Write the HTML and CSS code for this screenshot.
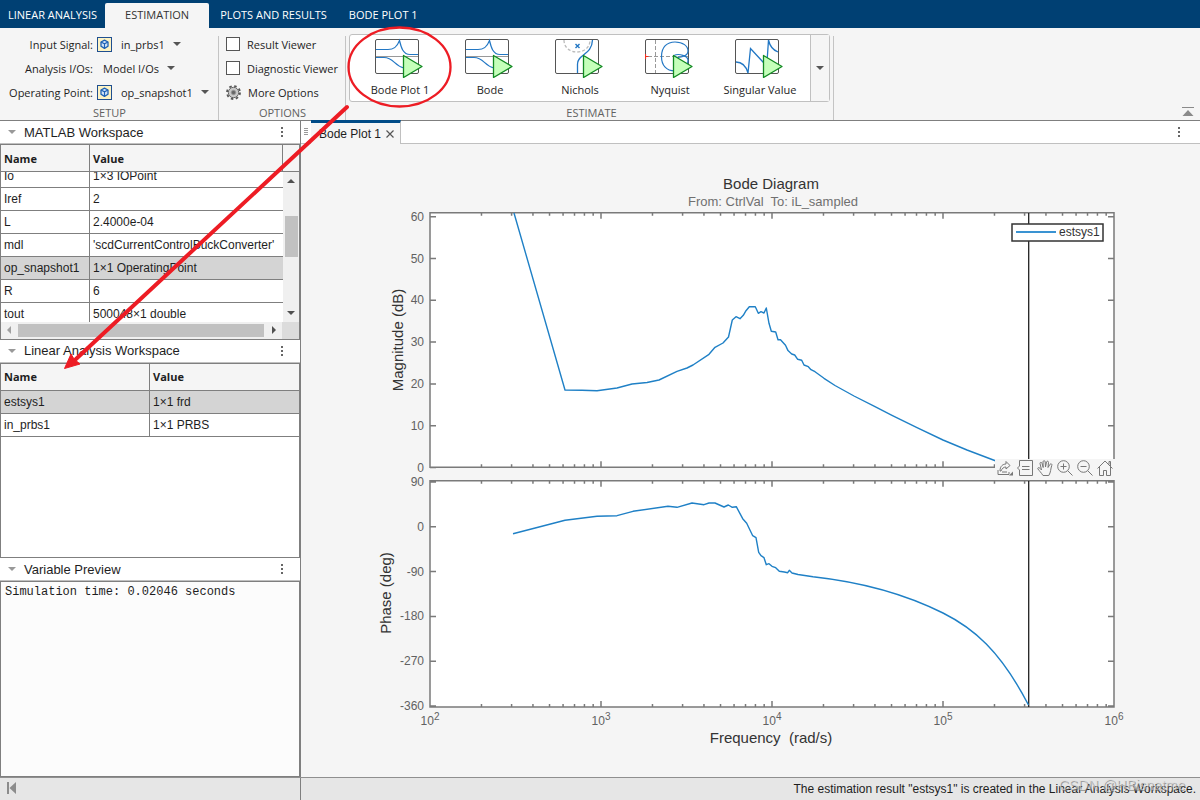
FILE: index.html
```html
<!DOCTYPE html>
<html lang="en">
<head>
    <meta charset="UTF-8">
    <meta name="viewport" content="width=device-width, initial-scale=1.0">
    <title>Linear Analysis Tool</title>
    <link rel="stylesheet" href="styles.css">
</head>
<body>
    <!-- shared icon shapes -->
    <svg class="defs" width="0" height="0">
        <symbol id="cube" viewBox="0 0 15 15">
            <rect x="0.5" y="0.5" width="14" height="14" fill="#fdf3c4" stroke="#1f4f90"/>
            <path d="M7.5 3.2 L11 5 V9.2 L7.5 11.400 L4 9.2 V5 Z" fill="#cfe3f7" stroke="#1f62b5" stroke-width="1.3" stroke-linejoin="round"/>
            <path d="M4 5 L7.5 6.800 L11 5 M7.5 6.800 V11" fill="none" stroke="#1f62b5" stroke-width="1.1"/>
        </symbol>
        <symbol id="play" viewBox="0 0 50 40">
            <path d="M28.5 17.5 L47 28.5 L28.5 39.5 Z" fill="#c5ffba" stroke="#128a22" stroke-width="1.3" stroke-linejoin="round"/>
        </symbol>
        <symbol id="bode" viewBox="0 0 50 40">
            <rect x="0.5" y="1.5" width="43" height="34" rx="1.5" fill="#fff" stroke="#555"/>
            <path d="M1 18.5 H43" stroke="#999"/>
            <path d="M1 11.5 H13 C19 11.5 22 9 24.5 2.5 C26 9 28 16.5 35 16.5 H43" fill="none" stroke="#2277c4" stroke-width="1.2"/>
            <path d="M1 19.5 H9 C19 19.5 19 28 29 30" fill="none" stroke="#2277c4" stroke-width="1.2"/>
            <use href="#play"/>
        </symbol>
    </svg>

    <nav class="tabs">
        <button class="tab first">LINEAR ANALYSIS</button>
        <button class="tab active">ESTIMATION</button>
        <button class="tab">PLOTS AND RESULTS</button>
        <button class="tab">BODE PLOT 1</button>
    </nav>

    <div class="ribbon">
        <section class="group setup">
            <div class="rows">
                <div class="row">
                    <label for="inputSignal">Input Signal:</label>
                    <svg class="cube"><use href="#cube"/></svg>
                    <span class="picker"><select id="inputSignal"><option>in_prbs1</option></select></span>
                </div>
                <div class="row">
                    <label for="analysisIos">Analysis I/Os:</label>
                    <span class="picker"><select id="analysisIos"><option>Model I/Os</option></select></span>
                </div>
                <div class="row">
                    <label for="operatingPoint">Operating Point:</label>
                    <svg class="cube"><use href="#cube"/></svg>
                    <span class="picker"><select id="operatingPoint"><option>op_snapshot1</option></select></span>
                </div>
            </div>
            <h3>SETUP</h3>
        </section>

        <section class="group options">
            <div class="rows">
                <label class="row"><input type="checkbox" id="resultViewer">Result Viewer</label>
                <label class="row"><input type="checkbox" id="diagnosticViewer">Diagnostic Viewer</label>
                <button class="row more">
                    <svg width="15" height="15" viewBox="0 0 15 15">
                        <circle cx="7.5" cy="7.5" r="6.5" fill="none" stroke="#555" stroke-width="1.8" stroke-dasharray="2.5 2.6"/>
                        <circle cx="7.5" cy="7.5" r="5.2" fill="#c8c8c8" stroke="#666"/>
                        <circle cx="7.5" cy="7.5" r="2.2" fill="#666" stroke="#999"/>
                    </svg>
                    More Options
                </button>
            </div>
            <h3>OPTIONS</h3>
        </section>

        <section class="group estimate">
            <div class="gallery">
                <button class="item">
                    <svg class="plot-icon"><use href="#bode"/></svg>
                    Bode Plot 1
                </button>
                <button class="item">
                    <svg class="plot-icon"><use href="#bode"/></svg>
                    Bode
                </button>
                <button class="item">
                    <svg class="plot-icon" viewBox="0 0 50 40">
                        <rect x="0.5" y="1.5" width="43" height="34" rx="1.5" fill="#fff" stroke="#555"/>
                        <path d="M9 2 C9 18 35 18 35 2" fill="none" stroke="#bbb" stroke-width="1.3" stroke-dasharray="3 2"/>
                        <path d="M20.5 6 L24.5 10 M24.5 6 L20.5 10" stroke="#2277c4" stroke-width="1.4"/>
                        <path d="M37.5 2 C37 17 22.5 16 22.5 26 V35" fill="none" stroke="#2277c4" stroke-width="1.3"/>
                        <use href="#play"/>
                    </svg>
                    Nichols
                </button>
                <button class="item">
                    <svg class="plot-icon" viewBox="0 0 50 40">
                        <rect x="0.5" y="1.5" width="43" height="34" rx="1.5" fill="#fff" stroke="#555"/>
                        <path d="M10.5 2 V35 M3 18.5 H43" stroke="#999" stroke-dasharray="4 2"/>
                        <path d="M0.5 16 V21 M0.5 18.5 H3.5" stroke="#f03020" stroke-width="1.2"/>
                        <path d="M29 17.5 C34 15 43 18 43 22 C43 30 37 33 30 33 C21 33 16.5 27 16.5 18.5 C16.5 9 22 4 30 4 C38 4 43 8 43 13 C43 18 36 20 30 19" fill="none" stroke="#2277c4" stroke-width="1.2"/>
                        <use href="#play"/>
                    </svg>
                    Nyquist
                </button>
                <button class="item">
                    <svg class="plot-icon" viewBox="0 0 50 40">
                        <rect x="0.5" y="1.5" width="43" height="34" rx="1.5" fill="#fff" stroke="#555"/>
                        <path d="M1 24 C8 24 11 28 13 35 L15.5 10.5 L28 24 L32 24 L33.5 2 C35 9 38 12 43 14" fill="none" stroke="#2277c4" stroke-width="1.3"/>
                        <use href="#play"/>
                    </svg>
                    Singular Value
                </button>
                <button class="expand" aria-label="Show more"></button>
            </div>
            <h3>ESTIMATE</h3>
        </section>

        <button class="minimize" aria-label="Minimize">
            <svg width="12" height="10" viewBox="0 0 12 10"><path d="M0 0.5 H12" stroke="#8a8a8a"/><path d="M0.5 9 L6 3 L11.5 9 Z" fill="#8a8a8a"/></svg>
        </button>
    </div>

    <main class="main">
        <aside class="side">
            <section class="panel">
                <header class="panel-head"><h2>MATLAB Workspace</h2><button class="kebab" aria-label="Panel menu"></button></header>
                <div class="panel-body">
                    <div class="grid-head">
                        <span class="name">Name</span><span class="value">Value</span><span class="stub"></span>
                    </div>
                    <div class="scroll">
                        <div class="view">
                            <table class="vars narrow">
                                <tr><td>Io</td><td>1×3 IOPoint</td></tr>
                                <tr><td>Iref</td><td>2</td></tr>
                                <tr><td>L</td><td>2.4000e-04</td></tr>
                                <tr><td>mdl</td><td>'scdCurrentControlBuckConverter'</td></tr>
                                <tr class="selected"><td>op_snapshot1</td><td>1×1 OperatingPoint</td></tr>
                                <tr><td>R</td><td>6</td></tr>
                                <tr><td>tout</td><td>500048×1 double</td></tr>
                            </table>
                        </div>
                        <div class="vbar"><i class="up"></i><i class="thumb"></i><i class="down"></i></div>
                    </div>
                    <div class="hbar"><i class="left"></i><i class="thumb"></i><i class="right"></i><i class="corner"></i></div>
                </div>
            </section>

            <section class="panel">
                <header class="panel-head"><h2>Linear Analysis Workspace</h2><button class="kebab" aria-label="Panel menu"></button></header>
                <div class="panel-body">
                    <table class="vars half">
                        <tr><th>Name</th><th>Value</th></tr>
                        <tr class="selected"><td>estsys1</td><td>1×1 frd</td></tr>
                        <tr><td>in_prbs1</td><td>1×1 PRBS</td></tr>
                    </table>
                </div>
            </section>

            <section class="panel">
                <header class="panel-head"><h2>Variable Preview</h2><button class="kebab" aria-label="Panel menu"></button></header>
                <div class="panel-body preview">Simulation time: 0.02046 seconds</div>
            </section>
        </aside>

        <section class="document">
            <div class="doc-tabs">
                <i class="grip"></i>
                <div class="doc-tab">
                    Bode Plot 1
                    <button class="close" aria-label="Close"><svg width="8" height="8" viewBox="0 0 8 8"><path d="M0.5 0.5 L7.5 7.5 M7.5 0.5 L0.5 7.5" stroke="#555" stroke-width="1.2"/></svg></button>
                </div>
                <button class="kebab" aria-label="Document menu"></button>
            </div>

            <svg class="figure" viewBox="301 144 899 633">
                <rect x="430" y="213" width="684" height="254" fill="#fff"/>
                <rect x="430" y="481" width="684" height="226" fill="#fff"/>
                <g id="axes"></g>
                <path class="limit" d="M1028.7 213 V467 M1028.7 481 V707"/>
                <path class="curve" d="M514 213 L565 390 L582 390.3 L597 390.7 L617 388 L632 384 L647 382.5 L659 380 L677 371.3 L687 368 L693 365 L709 354.3 L715 347.3 L723 343 L728.5 337 L732.3 320 L736 316.7 L740 318.7 L743.3 315.3 L746 310.7 L749.3 306.7 L755.3 306.7 L758.3 313.3 L761 311.7 L764 313 L766.3 308 L769 323.3 L771.3 331.3 L775.7 332 L778 339.7 L780.5 339.7 L785.5 345.3 L788 350.6 L791.7 354 L794.7 355 L797.7 359.3 L801.7 360.3 L804 365 L808.3 366.7 L811 369.7 L815 371.7 L824 378.3 L835 385.5 L854 396 L875 406.7 L892 415.3 L917 427.7 L943 440 L967 450 L996 461"/>
                <path class="curve" d="M513 533.7 L540 526.7 L565 520.3 L597 516.3 L617 515.7 L633 511.3 L668 506.3 L677 507.3 L692 503 L704 504.7 L709 503 L715 503 L724 507 L728.3 505 L732.3 507.3 L736.3 506.7 L742.7 518.7 L746.7 523.3 L752.7 535.7 L756 537.7 L758.7 552.3 L761 555.7 L764 557.7 L766.3 564.7 L769 563.7 L772 566.3 L775.7 567.7 L779.3 571.3 L784.3 572 L787.7 572.7 L789.3 570.3 L792 573 L798 574.5 L813 576.7 C870 583 913 598 943 613 S1000 650 1028.5 705"/>

                <text class="title" x="771" y="189">Bode Diagram</text>
                <text class="subtitle" x="773" y="206">From: CtrlVal&nbsp; To: iL_sampled</text>
                <text class="title" x="771" y="743">Frequency&nbsp; (rad/s)</text>
                <text class="title" transform="translate(403 340) rotate(-90)">Magnitude (dB)</text>
                <text class="title" transform="translate(391 593) rotate(-90)">Phase (deg)</text>

                <rect class="legend" x="1012" y="224" width="91" height="17"/>
                <path class="key" d="M1016 232 H1056"/>
                <text class="legend-text" x="1059" y="236">estsys1</text>

                <foreignObject x="995" y="459" width="120" height="20">
                    <div class="toolbar">
                        <button aria-label="Export"><svg viewBox="0 0 16 16"><path d="M1 10 V14.5 H12 V12 M3 11 C3 6 6 4 9 4 V1.5 L13 5.5 L9 9 V7 C6.5 7 5 8.5 4 11 Z M5 12 H10"/><path d="M16 11.5 V15.5 H12 Z" fill="#777" stroke="none"/></svg></button>
                        <button aria-label="Data tips"><svg viewBox="0 0 16 16"><path d="M2.5 0.5 H15.5 V15.5 H2.5 V10 L0.5 8 L2.5 6 Z M5 6.5 H12.5 M5 9.5 H12.5"/></svg></button>
                        <button aria-label="Pan"><svg viewBox="0 0 16 16"><path d="M6 15.5 C4 12.5 2.5 11 0.8 8.8 C0.5 7.5 2 7.2 3 8.3 L4.5 10 L3 3.5 C3 2 4.7 2 5 3.3 L6.2 7.5 L6 1.8 C6.2 0.3 8 0.3 8.2 1.8 L8.5 7 L9.5 2 C10 0.7 11.6 1 11.5 2.5 L11 7.5 L13 4.3 C14 3.3 15.3 4 14.8 5.3 C13.5 9 14 12 11.8 15.5 Z"/></svg></button>
                        <button aria-label="Zoom in"><svg viewBox="0 0 16 16"><circle cx="6.5" cy="6.5" r="5.8"/><path d="M3.5 6.5 H9.5 M6.5 3.5 V9.5 M10.8 10.8 L15.5 15.5"/></svg></button>
                        <button aria-label="Zoom out"><svg viewBox="0 0 16 16"><circle cx="6.5" cy="6.5" r="5.8"/><path d="M3.5 6.5 H9.5 M10.8 10.8 L15.5 15.5"/></svg></button>
                        <button aria-label="Restore view"><svg viewBox="0 0 16 16"><path d="M0.5 8.5 L8 1 L15.5 8.5 M2.5 7 V15.5 H6.5 V10.5 H9.5 V15.5 H13.5 V7 M12 4.5 V1.5 H13.5 V6"/></svg></button>
                    </div>
                </foreignObject>
            </svg>
        </section>
    </main>

    <footer class="status">
        <div class="status-left">
            <button aria-label="Collapse"><svg width="10" height="12" viewBox="0 0 10 12"><path d="M0 0 H2 V12 H0 Z M9 0 V12 L2.5 6 Z" fill="#8c8c8c"/></svg></button>
        </div>
        <div class="status-text">The estimation result "estsys1" is created in the Linear Analysis Workspace.</div>
        <span class="watermark">CSDN @HBisnatme</span>
    </footer>

    <!-- annotation over the window -->
    <svg class="annotation" width="480" height="400" viewBox="0 0 480 400">
        <ellipse cx="399.5" cy="67" rx="51" ry="39.5" fill="none" stroke="#ed1c24" stroke-width="2.3"/>
        <path d="M347 107 L76 359" stroke="#ed1c24" stroke-width="4" stroke-linecap="round"/>
        <path d="M64.5 368.5 L71 354 L74 359 L80 364 Z" fill="#ed1c24" stroke="#ed1c24"/>
    </svg>

    <script src="script.js"></script>
</body>
</html>
```

FILE: styles.css
```css
* {
    box-sizing: border-box;
}
body {
    margin: 0;
    height: 100vh;
    display: flex;
    flex-direction: column;
    position: relative;
    overflow: hidden;
    background: #f5f5f5;
    color: #1e1e1e;
    font-family: "Open Sans", "Noto Sans", sans-serif;
    font-size: 11px;
}
button, select {
    font: inherit;
    color: inherit;
    background: none;
    border: none;
    padding: 0;
    margin: 0;
}
h2, h3 {
    margin: 0;
    font-weight: normal;
}
.defs {
    position: absolute;
}

/* top tabs */
.tabs {
    display: flex;
    align-items: flex-end;
    height: 28px;
    background: #004073;
    color: #fff;
}
.tab {
    height: 25px;
    padding: 0 11px 2px;
    white-space: nowrap;
}
.tab.first {
    padding: 0 8px 2px;
}
.tab.active {
    padding: 0 20px 2px;
    background: #f5f5f5;
    color: #333;
    border-radius: 2px 2px 0 0;
}

/* ribbon */
.ribbon {
    display: flex;
    height: 93px;
    border-bottom: 1px solid #7f7f7f;
}
.group {
    display: flex;
    flex-direction: column;
    padding-top: 4px;
    background: linear-gradient(#c4c4c4, #c4c4c4) right 0 top 8px / 1px 100% no-repeat;
}
.group h3 {
    margin-top: auto;
    font-size: 11px;
    line-height: 15px;
    text-align: center;
    color: #616161;
}
.setup {
    width: 219px;
}
.options {
    width: 127px;
}
.estimate {
    width: 488px;
    padding-left: 3px;
}
.row {
    display: flex;
    align-items: center;
    height: 24px;
    white-space: nowrap;
}
.setup .row label {
    width: 93px;
    text-align: right;
}
.cube {
    width: 15px;
    height: 15px;
    margin: 0 -1px 0 4px;
}
.picker {
    display: flex;
    align-items: center;
    gap: 8px;
    margin-left: 10px;
}
.picker select {
    appearance: none;
}
.picker::after, .expand::after {
    content: "";
    border: 4px solid transparent;
    border-top-color: #555;
    border-bottom: none;
}
.options .row {
    gap: 7px;
    padding-left: 7px;
}
.options input {
    appearance: none;
    width: 14px;
    height: 14px;
    margin: 0;
    background: #fff;
    border: 1px solid #555;
}
.gallery {
    display: flex;
    width: 481px;
    height: 68px;
    margin-top: 2px;
    padding-left: 5px;
    background: #fff;
    border: 1px solid #c0c0c0;
    border-radius: 3px;
}
.item {
    flex: 1;
    display: flex;
    flex-direction: column;
    align-items: center;
    padding-top: 3px;
    line-height: 23px;
    white-space: nowrap;
}
.plot-icon {
    width: 50px;
    height: 40px;
}
.expand {
    width: 19px;
    margin-left: 5px;
    display: flex;
    align-items: center;
    justify-content: center;
    background: #f5f5f5;
    border-left: 1px solid #c0c0c0;
}
.minimize {
    align-self: flex-end;
    margin: 0 6px 0 auto;
}

/* side panels */
.main {
    flex: 1;
    display: flex;
    min-height: 0;
}
.side {
    width: 301px;
    display: flex;
    flex-direction: column;
    border-right: 1px solid #7f7f7f;
    font-family: "Liberation Sans", Arial, sans-serif;
    font-size: 12px;
}
.panel {
    flex: 1;
    display: flex;
    flex-direction: column;
    min-height: 0;
    background: #fff;
}
.panel-head {
    display: flex;
    align-items: center;
    height: 23px;
    padding: 0 11px 0 8px;
    border-bottom: 1px solid #c0c0c0;
}
.panel-head::before {
    content: "";
    border: 4px solid transparent;
    border-top-color: #999;
    border-bottom: none;
}
.panel-head h2 {
    flex: 1;
    margin-left: 8px;
    font-size: 13px;
}
.kebab {
    width: 15px;
    height: 12px;
    background: radial-gradient(circle, #666 1px, transparent 1px) center / 4px 4px repeat-y;
}
.panel-body {
    flex: 1;
    display: flex;
    flex-direction: column;
    min-height: 0;
    border: 1px solid #7f7f7f;
}
.grid-head, th {
    height: 27px;
    background: #f5f5f5;
    font-family: "Open Sans", "Noto Sans", sans-serif;
    font-weight: bold;
    font-size: 11px;
}
.grid-head {
    display: flex;
    line-height: 27px;
    border-bottom: 1px solid #7f7f7f;
}
.grid-head span {
    padding-left: 3px;
    border-right: 1px solid #7f7f7f;
}
.grid-head .name {
    width: 89px;
}
.grid-head .value {
    flex: 1;
}
.grid-head .stub {
    width: 16px;
    border: none;
}
.scroll {
    flex: 1;
    display: flex;
    min-height: 0;
}
.view {
    flex: 1;
    overflow: hidden;
}
.vars {
    width: 100%;
    table-layout: fixed;
    border-spacing: 0;
}
.vars th, .vars td {
    padding: 0 0 0 3px;
    text-align: left;
    white-space: nowrap;
    border-right: 1px solid #7f7f7f;
    border-bottom: 1px solid #7f7f7f;
}
.vars td:last-child, .vars th:last-child {
    border-right: none;
}
.vars td {
    height: 23px;
}
.half td, .half th {
    width: 50%;
}
.narrow {
    margin-top: -7px;
}
.narrow td:first-child {
    width: 89px;
}
.selected {
    background: #d4d4d4;
}
.vbar, .hbar {
    display: flex;
    align-items: center;
    background: #f0f0f0;
}
.vbar {
    flex-direction: column;
    width: 16px;
}
.hbar {
    height: 17px;
}
.up, .down, .left, .right {
    border: 4px solid transparent;
}
.up {
    border-top: none;
    border-bottom-color: #505050;
    margin: 7px 0 33px;
}
.down {
    border-bottom: none;
    border-top-color: #505050;
    margin: auto 0 7px;
}
.left {
    border-left: none;
    border-right-color: #a0a0a0;
    margin: 0 7px 0 6px;
}
.right {
    border-right: none;
    border-left-color: #505050;
    margin: 0 6px 0 8px;
}
.vbar .thumb {
    width: 13px;
    height: 41px;
    background: #c1c1c1;
}
.hbar .thumb {
    flex: 1;
    height: 13px;
    background: #c1c1c1;
}
.corner {
    width: 17px;
    height: 17px;
    background: #dcdcdc;
}
.preview {
    padding: 3px 4px;
    background: #fcfcfc;
    font-family: "Liberation Mono", "Courier New", monospace;
}

/* document area */
.document {
    flex: 1;
    display: flex;
    flex-direction: column;
    min-width: 0;
}
.doc-tabs {
    display: flex;
    align-items: center;
    height: 23px;
    padding-right: 14px;
    background: #fff;
    border-bottom: 1px solid #c0c0c0;
    font-family: "Liberation Sans", Arial, sans-serif;
    font-size: 12px;
}
.grip {
    width: 4px;
    height: 8px;
    margin: 0 3px;
    background: repeating-linear-gradient(#999 0 1px, transparent 1px 2px);
}
.doc-tab {
    display: flex;
    align-items: center;
    gap: 5px;
    height: 24px;
    padding: 0 6px 0 8px;
    background: #f5f5f5;
    border-top: 3px solid #004b87;
    border-right: 1px solid #c0c0c0;
}
.close {
    display: flex;
}
.doc-tabs .kebab {
    margin-left: auto;
}
.figure {
    flex: 1;
    min-height: 0;
    width: 100%;
    font-family: "Liberation Sans", Arial, sans-serif;
    font-size: 12px;
}
.axis {
    fill: none;
    stroke: #7a7a7a;
    stroke-width: 1.5;
}
.tick-label {
    fill: #616161;
}
.curve {
    fill: none;
    stroke: #1f80c6;
    stroke-width: 1.4;
    stroke-linejoin: round;
}
.limit {
    stroke: #222;
    stroke-width: 1.3;
}
.title {
    fill: #333;
    font-size: 15px;
    text-anchor: middle;
}
.subtitle {
    fill: #707070;
    font-size: 13px;
    text-anchor: middle;
}
.legend {
    fill: #fff;
    stroke: #333;
    stroke-width: 1.5;
}
.key {
    stroke: #3a93d2;
    stroke-width: 2;
}
.legend-text {
    fill: #333;
}
.toolbar {
    display: flex;
    height: 18px;
    background: #f5f5f5;
}
.toolbar button {
    flex: 1;
    display: flex;
    align-items: center;
    justify-content: center;
}
.toolbar svg {
    width: 16px;
    height: 16px;
    fill: none;
    stroke: #777;
}

/* status bar */
.status {
    position: relative;
    display: flex;
    height: 23px;
    background: #e6e6e6;
    border-top: 1px solid #8f8f8f;
    font-family: "Liberation Sans", Arial, sans-serif;
    font-size: 12px;
}
.status-left {
    display: flex;
    align-items: center;
    width: 301px;
    padding-left: 7px;
    border-right: 1px solid #7f7f7f;
}
.status-text {
    flex: 1;
    padding-right: 4px;
    line-height: 22px;
    text-align: right;
}
.watermark {
    position: absolute;
    right: 15px;
    top: -2px;
    font-size: 14px;
    line-height: 18px;
    color: rgba(225, 225, 225, 0.6);
    text-shadow: 1px 1px 0 rgba(110, 110, 110, 0.6);
}
.annotation {
    position: absolute;
    left: 0;
    top: 0;
    pointer-events: none;
}
```

FILE: script.js
```javascript
const axes = document.getElementById("axes");
const LEFT = 430;
const RIGHT = 1114;
const DECADE = 171;

function add(tag, attrs, html) {
    const el = document.createElementNS("http://www.w3.org/2000/svg", tag);
    for (const key in attrs) {
        el.setAttribute(key, attrs[key]);
    }
    if (html) {
        el.innerHTML = html;
    }
    axes.appendChild(el);
}

function drawAxes(top, bottom, labels, first, step) {
    let d = `M${LEFT} ${top} H${RIGHT} V${bottom} H${LEFT} Z`;

    // log ticks along the top and bottom edges
    for (let decade = 0; decade < 4; decade++) {
        for (let n = 1; n < 10; n++) {
            const x = LEFT + DECADE * (decade + Math.log10(n));
            const len = n === 1 ? 6 : 3;
            d += ` M${x} ${top} v${len} M${x} ${bottom} v${-len}`;
        }
    }

    labels.forEach(function(label, i) {
        const y = first + i * step;
        d += ` M${LEFT} ${y} h6 M${RIGHT} ${y} h-6`;
        add("text", { class: "tick-label", x: 424, y: y + 4, "text-anchor": "end" }, String(label));
    });
    add("path", { class: "axis", d: d });
}

drawAxes(212.7, 467.3, [60, 50, 40, 30, 20, 10, 0], 216.7, 41.8);
drawAxes(480.7, 707, [90, 0, -90, -180, -270, -360], 482, 44.8);

for (let p = 2; p <= 6; p++) {
    add("text", { class: "tick-label", x: LEFT + DECADE * (p - 2), y: 725, "text-anchor": "middle" },
        `10<tspan dy="-5" font-size="10">${p}</tspan>`);
}
```
